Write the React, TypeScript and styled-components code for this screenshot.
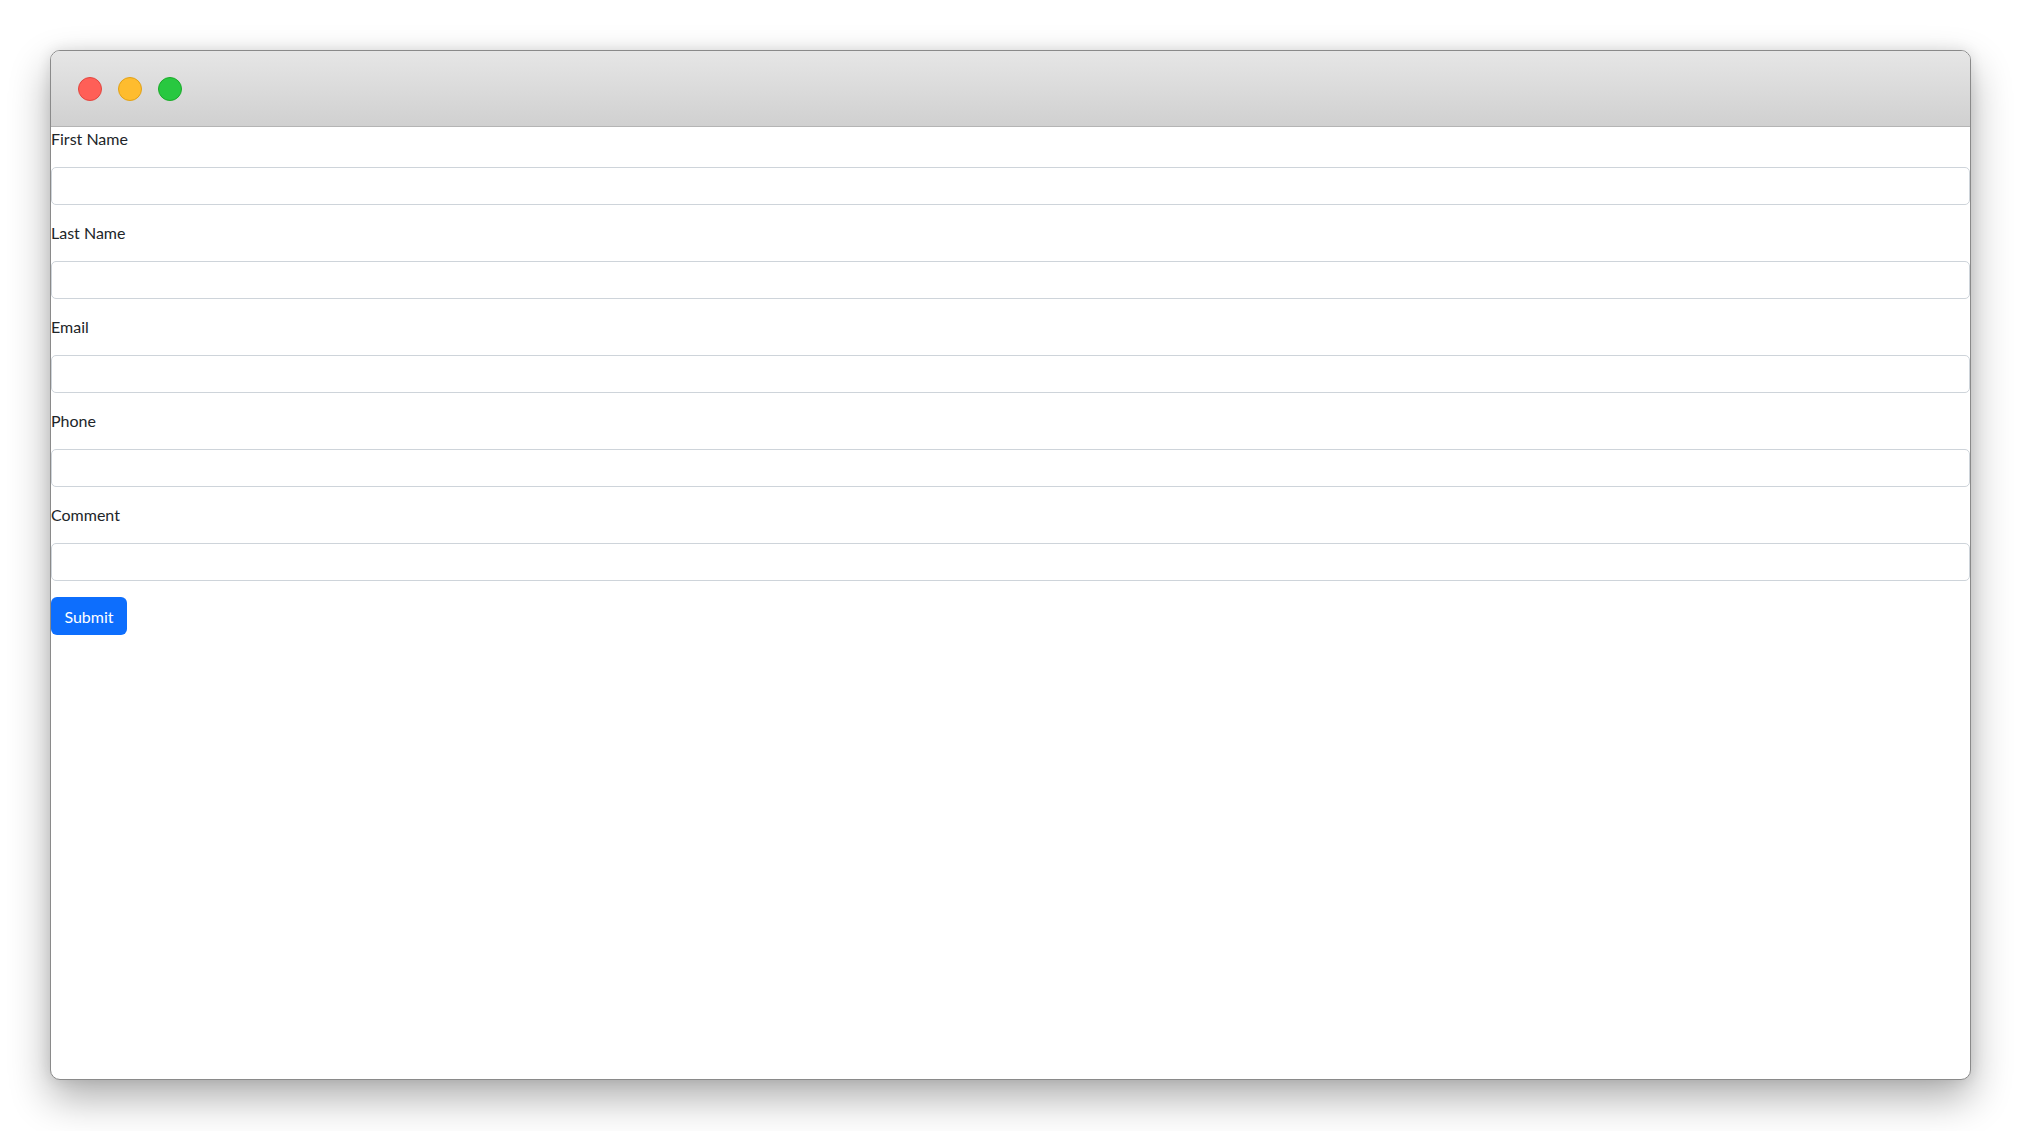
import React from "react";
import styled, { createGlobalStyle } from "styled-components";

const Global = createGlobalStyle`
  html, body { margin: 0; padding: 0; background: #ffffff; }
  body { font-family: Lato, "Segoe UI", "Noto Sans", sans-serif; }
  * { box-sizing: border-box; }
`;

const Page = styled.div`
  width: 2022px;
  height: 1131px;
  padding: 50px 51px 51px 50px;
  display: flex;
`;

const Window = styled.div`
  flex: 1;
  display: flex;
  flex-direction: column;
  border: 1px solid #8a8a8a;
  border-radius: 10px;
  overflow: hidden;
  background: #ffffff;
  box-shadow: 0 18px 40px rgba(0, 0, 0, 0.32), 0 0 14px rgba(0, 0, 0, 0.1);
`;

const TitleBar = styled.div`
  height: 76px;
  flex: none;
  display: flex;
  align-items: center;
  gap: 16px;
  padding-left: 27px;
  padding-top: 1px;
  background: linear-gradient(#e6e6e6, #d0d0d0);
  border-bottom: 1px solid #b4b4b4;
`;

const Light = styled.span<{ $bg: string; $bd: string }>`
  width: 24px;
  height: 24px;
  border-radius: 50%;
  background: ${(p) => p.$bg};
  border: 1px solid ${(p) => p.$bd};
`;

const Form = styled.form`
  display: flex;
  flex-direction: column;
  align-items: flex-start;
`;

const Field = styled.div`
  width: 100%;
  display: flex;
  flex-direction: column;
  gap: 16px;
  margin-bottom: 16px;
`;

const Label = styled.label`
  font-size: 16px;
  line-height: 24px;
  color: #212529;
`;

const Input = styled.input`
  width: 100%;
  height: 38px;
  border: 1px solid #ced4da;
  border-radius: 5px;
  padding: 6px 12px;
  font-size: 16px;
  font-family: inherit;
  outline: none;
`;

const Button = styled.button`
  height: 38px;
  min-width: 76px;
  padding: 0 12px;
  border: none;
  border-radius: 6px;
  background: #0d6efd;
  color: #ffffff;
  font-size: 16px;
  font-family: inherit;
`;

const fields = ["First Name", "Last Name", "Email", "Phone", "Comment"];

export default function App() {
  return (
    <Page>
      <Global />
      <Window>
        <TitleBar>
          <Light $bg="#ff5f57" $bd="#e2463f" />
          <Light $bg="#febc2e" $bd="#e1a116" />
          <Light $bg="#28c840" $bd="#1aab29" />
        </TitleBar>
        <Form onSubmit={(e) => e.preventDefault()}>
          {fields.map((f) => (
            <Field key={f}>
              <Label>{f}</Label>
              <Input type="text" />
            </Field>
          ))}
          <Button type="submit">Submit</Button>
        </Form>
      </Window>
    </Page>
  );
}
